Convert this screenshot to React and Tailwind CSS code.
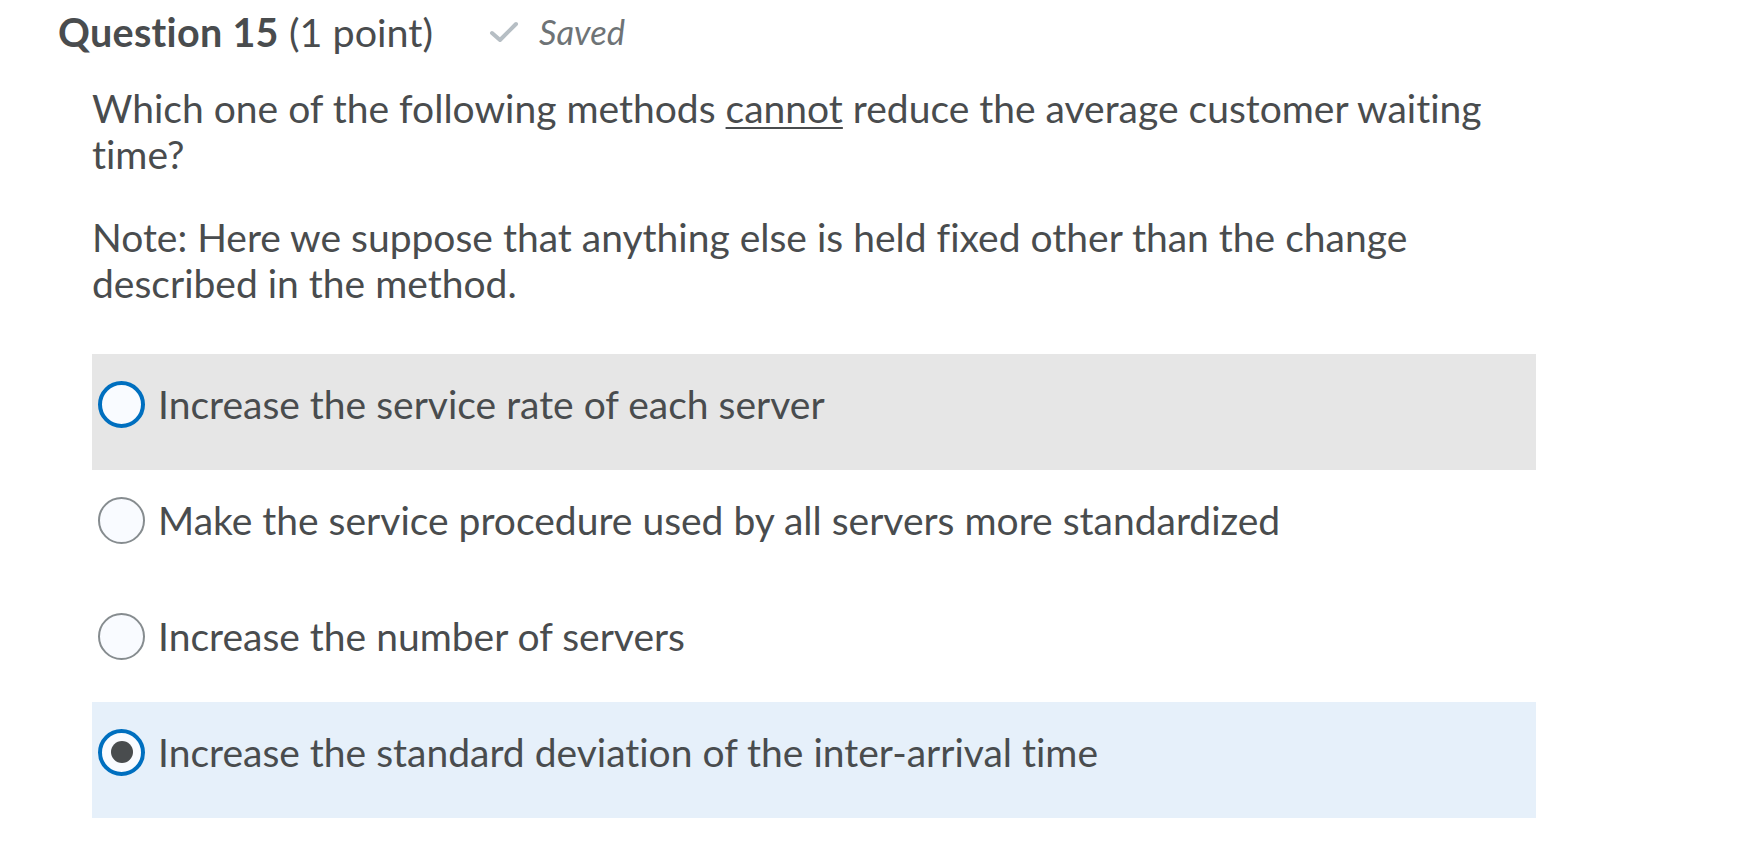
import { useState } from "react";

const options = [
  "Increase the service rate of each server",
  "Make the service procedure used by all servers more standardized",
  "Increase the number of servers",
  "Increase the standard deviation of the inter-arrival time",
];

function Radio({ checked, focused }) {
  if (checked) {
    return (
      <div className="w-[47px] h-[47px] rounded-full border-[4px] border-[#006fbf] bg-[#f9fbff] flex items-center justify-center shrink-0">
        <div className="w-[22px] h-[22px] rounded-full bg-[#494c4e]" />
      </div>
    );
  }
  return (
    <div
      className={
        focused
          ? "w-[47px] h-[47px] rounded-full border-[4px] border-[#006fbf] bg-[#f9fbff] shrink-0"
          : "w-[47px] h-[47px] rounded-full border-2 border-[#868c8f] bg-[#f9fbff] shrink-0"
      }
    />
  );
}

export default function App() {
  const [selected, setSelected] = useState(3);
  const hovered = 0;

  return (
    <div
      className="w-[1740px] h-[864px] bg-white text-[#494c4e] overflow-hidden [font-variant-ligatures:none]"
      style={{ fontFamily: "Lato, 'Open Sans', sans-serif" }}
    >
      <div className="pl-[58px] pt-[8px] flex items-center h-[56px]">
        <h2 className="text-[39.5px] leading-[44px]">
          <span className="font-bold tracking-[0.3px]">Question 15</span> (1 point)
        </h2>
        <div className="flex items-center ml-[56px]">
          <svg width="30" height="24" viewBox="0 0 30 24" className="mr-[20px]">
            <polyline
              points="3,13 11,20 27,4"
              fill="none"
              stroke="#b6bec4"
              strokeWidth="4"
              strokeLinecap="round"
              strokeLinejoin="round"
            />
          </svg>
          <span className="italic text-[34.5px] text-[#6e7376]">Saved</span>
        </div>
      </div>

      <div className="pl-[92px] w-[1536px] mt-[29px]">
        <p className="text-[39px] leading-[46px] w-[1420px]">
          Which one of the following methods <span className="underline underline-offset-[4px] decoration-2">cannot</span> reduce the average customer waiting time?
        </p>
        <p className="text-[39px] leading-[46px] w-[1420px] mt-[37px]">
          Note: Here we suppose that anything else is held fixed other than the change described in the method.
        </p>

        <div className="mt-[48px] flex flex-col">
          {options.map((opt, i) => (
            <label
              key={i}
              onClick={() => setSelected(i)}
              className={
                "h-[116px] pl-[6px] pt-[26px] flex items-start cursor-pointer " +
                (i === selected ? "bg-[#e6f0fa]" : i === hovered ? "bg-[#e6e6e6]" : "bg-white")
              }
            >
              <div className="flex items-center gap-[13px] h-[48px]">
                <Radio checked={i === selected} focused={i === hovered} />
                <span className="text-[39px] leading-[46px]">{opt}</span>
              </div>
            </label>
          ))}
        </div>
      </div>
    </div>
  );
}
